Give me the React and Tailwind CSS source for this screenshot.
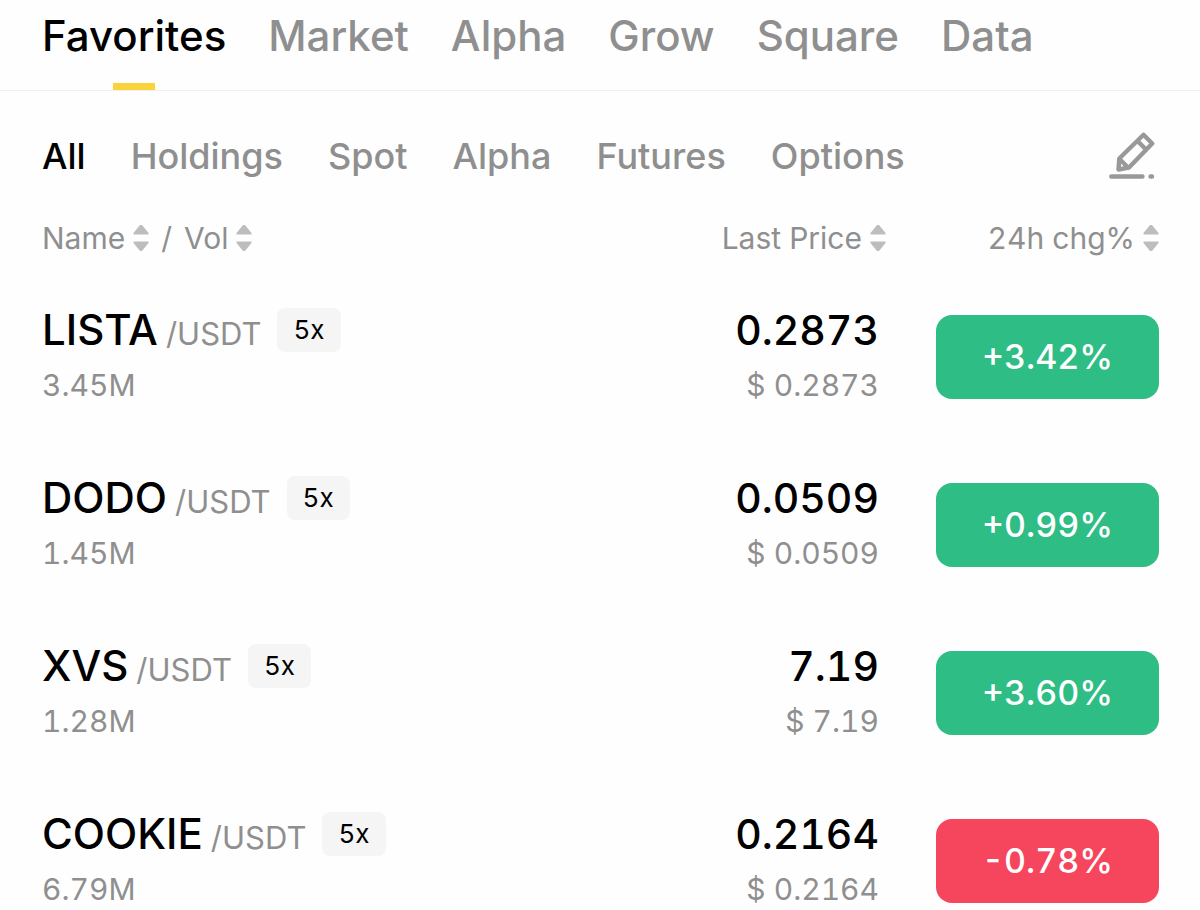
const sections = ["Favorites", "Market", "Alpha", "Grow", "Square", "Data"];
const filters = ["All", "Holdings", "Spot", "Alpha", "Futures", "Options"];
const pairs = [
  { base: "LISTA", vol: "3.45M", price: "0.2873", change: "+3.42%", up: true },
  { base: "DODO", vol: "1.45M", price: "0.0509", change: "+0.99%", up: true },
  { base: "XVS", vol: "1.28M", price: "7.19", change: "+3.60%", up: true },
  { base: "COOKIE", vol: "6.79M", price: "0.2164", change: "-0.78%", up: false },
];

function SortButton({ label }) {
  return (
    <button type="button" className="inline-flex items-center gap-2">
      {label}
      <svg className="h-7 w-4" viewBox="0 0 16 28" fill="#bdbdbd" aria-hidden="true">
        <path d="M0.500 10.500V9L7 1h2l6.500 8v1.500z" />
        <path d="M0.500 17.500V19l6.500 8h2l6.500-8v-1.500z" />
      </svg>
    </button>
  );
}

function EditIcon() {
  return (
    <svg className="h-12 w-[46px]" viewBox="0 0 46 48" fill="none" stroke="#999999" strokeWidth="4.400" strokeLinejoin="round" strokeLinecap="round" aria-hidden="true">
      <path d="M34.500 2.800L43.200 11.500L20 35.500L9.500 37.500L10.300 26.500Z" />
      <path d="M28.500 9L37.500 18" strokeLinecap="butt" />
      <path d="M11 27.500L19 35.500" strokeLinecap="butt" />
      <path d="M2.300 44.500H33.500M41.500 44.500H43" />
    </svg>
  );
}

export default function App() {
  return (
    <div className="min-h-screen bg-[#fefefe] font-['Inter',sans-serif] text-black">
      <nav className="flex gap-[42px] border-b border-[#efefef] px-[42px] pt-[14px]">
        {sections.map((name, i) => (
          <button
            key={name}
            type="button"
            className={`flex flex-col items-center gap-[25px] text-[42px] leading-[44px] font-medium ${i === 0 ? "text-black" : "text-[#8f8f8f]"}`}
          >
            {name}
            <span className={`h-[7px] w-[42px] ${i === 0 ? "bg-[#f8d33a]" : ""}`} />
          </button>
        ))}
      </nav>

      <div className="flex items-center justify-between pt-[41px] pr-[45px] pl-[42px]">
        <div className="flex gap-[45px]">
          {filters.map((name, i) => (
            <button
              key={name}
              type="button"
              className={`text-[36px] leading-[48px] font-medium ${i === 0 ? "text-black" : "text-[#8f8f8f]"}`}
            >
              {name}
            </button>
          ))}
        </div>
        <button type="button" aria-label="Edit favorites">
          <EditIcon />
        </button>
      </div>

      <div className="pt-9 pr-[41px] pl-[42px]">
        <table className="w-full tabular-nums">
          <thead>
            <tr className="text-[30px] leading-[44px] text-[#8f8f8f]">
              <th className="pb-12 text-left font-normal">
                <div className="flex items-center gap-3">
                  <SortButton label="Name" />
                  <span>/</span>
                  <SortButton label="Vol" />
                </div>
              </th>
              <th className="pb-12 text-right font-normal">
                <div className="flex justify-end"><SortButton label="Last Price" /></div>
              </th>
              <th className="w-[273px] pb-12 text-right font-normal">
                <div className="flex justify-end"><SortButton label="24h chg%" /></div>
              </th>
            </tr>
          </thead>
          <tbody>
            {pairs.map((p) => (
              <tr key={p.base} className="group">
                <td className="pb-[70px] group-last:pb-0">
                  <div className="flex items-center gap-4">
                    <div className="flex items-baseline gap-2">
                      <span className="text-[42px] leading-[44px] font-medium">{p.base}</span>
                      <span className="text-[31px] leading-[31px] text-[#8f8f8f]">/USDT</span>
                    </div>
                    <span className="rounded-lg bg-[#f5f5f5] px-4 text-[26px] leading-[44px]">5x</span>
                  </div>
                  <div className="mt-3 text-[30px] leading-[42px] text-[#8f8f8f]">{p.vol}</div>
                </td>
                <td className="pr-[7px] pb-[70px] text-right group-last:pb-0">
                  <div className="text-[41px] leading-[44px] font-medium">{p.price}</div>
                  <div className="mt-3 text-[30px] leading-[42px] text-[#8f8f8f]">$ {p.price}</div>
                </td>
                <td className="pb-[70px] pl-[50px] group-last:pb-0">
                  <div className={`rounded-2xl text-center text-[34px] leading-[84px] font-medium text-white ${p.up ? "bg-[#2ebd85]" : "bg-[#f6465d]"}`}>
                    {p.change}
                  </div>
                </td>
              </tr>
            ))}
          </tbody>
        </table>
      </div>
    </div>
  );
}
